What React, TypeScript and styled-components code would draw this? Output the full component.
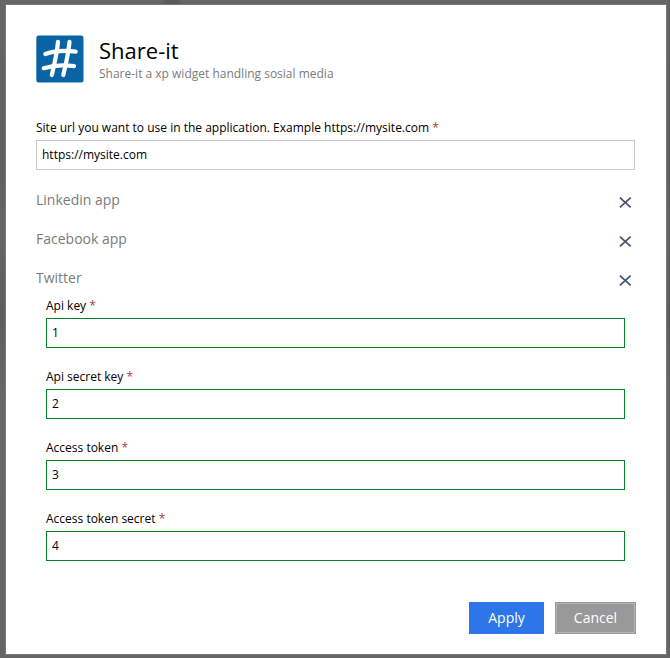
import React from "react";
import styled, { createGlobalStyle } from "styled-components";

const GlobalStyle = createGlobalStyle`
  *, *::before, *::after { box-sizing: border-box; }
  body { margin: 0; font-family: "Open Sans", sans-serif; color: #000; background: #646464; }
`;

const Backdrop = styled.div`
  height: 658px;
  padding: 4px 3px 3px 5px;
  background:
    linear-gradient(90deg, transparent 160px, #5a5a5a 166px, #5a5a5a 176px, transparent 184px) 0 0 / 100% 4px no-repeat,
    linear-gradient(180deg, #666 0, #606060 25%, #666 35%, #5e5e5e 48%, #686868 60%, #646464 100%);
`;

const Dialog = styled.main`
  height: 651px;
  border: 1px solid #777;
  background: #fff;
  padding: 30px 30px 20px;
  display: flex;
  flex-direction: column;
`;

const Header = styled.header`
  display: flex;
  height: 48px;
  gap: 15px;
`;

const Title = styled.h1`
  margin: 0;
  font-size: 22px;
  font-weight: 400;
  line-height: 31px;
`;

const Subtitle = styled.p`
  margin: 0;
  font-size: 12px;
  line-height: 16px;
  color: #7b7b7b;
`;

const Label = styled.label`
  display: block;
  height: 20px;
  font-size: 12px;
  line-height: 16px;
  white-space: nowrap;
`;

const Required = styled.span`
  color: #a4423a;
`;

const Input = styled.input<{ $valid?: boolean }>`
  display: block;
  width: 100%;
  height: 30px;
  padding: 0 5px 2px;
  border: 1px solid ${(p) => (p.$valid ? "#008424" : "#c8c8c8")};
  border-radius: 0;
  outline: none;
  background: #fff;
  color: #000;
  font: 12px "Open Sans", sans-serif;
`;

const SiteField = styled.div`
  margin-top: 37px;
  padding-right: 1px;
`;

const Sections = styled.div`
  margin-top: 20px;
`;

const SectionHead = styled.div`
  display: flex;
  justify-content: space-between;
  height: 39px;
  padding-right: 4px;
`;

const SectionTitle = styled.h2`
  margin: 0;
  font-size: 14px;
  font-weight: 400;
  line-height: 20px;
  color: #7b7b7b;
`;

const Remove = styled.button`
  width: 14px;
  height: 14px;
  margin-top: 6px;
  padding: 0;
  border: 0;
  background: none;
  svg { display: block; }
`;

const Group = styled.div`
  display: grid;
  gap: 21px;
  margin-top: -9px;
  padding: 0 11px 0 10px;
`;

const Footer = styled.footer`
  display: flex;
  justify-content: flex-end;
  gap: 11px;
  margin-top: 41px;
`;

const Button = styled.button<{ $primary?: boolean }>`
  width: ${(p) => (p.$primary ? 75 : 81)}px;
  height: 32px;
  padding: 0 0 2px;
  border: 1px solid ${(p) => (p.$primary ? "#2c76e9" : "#999")};
  box-shadow: ${(p) => (p.$primary ? "none" : "inset 0 0 0 1px #b2b2b7")};
  background: ${(p) => (p.$primary ? "#2c76e9" : "#999")};
  color: #fff;
  font: 14px "Open Sans", sans-serif;
`;

const HashLogo = () => (
  <svg width="48" height="48" viewBox="0 0 48 48" aria-hidden="true">
    <rect x="0.3" y="0.6" width="47.2" height="47" rx="2.5" fill="#0864a4" />
    <g fill="none" stroke="#fff" strokeWidth="4.2" strokeLinecap="round">
      <path d="M22 6.8C21 18 18.5 29 15.8 40M33.5 6.8C32.5 18 30 29 27.3 40" />
      <path d="M9.3 19C18 16 29 15.2 39.7 16.6M7.7 33.2C17 30.4 28 29.8 38 31.2" />
    </g>
  </svg>
);

const Cross = () => (
  <svg width="14" height="14" viewBox="0 0 14 14" aria-hidden="true">
    <path d="M1.9 1.7 12.7 11.3M12.7 1.7 1.9 11.3" fill="none" stroke="#48566b" strokeWidth="1.8" />
  </svg>
);

const sections = ["Linkedin app", "Facebook app", "Twitter"];

const twitterFields = [
  { label: "Api key", value: "1" },
  { label: "Api secret key", value: "2" },
  { label: "Access token", value: "3" },
  { label: "Access token secret", value: "4" },
];

export default function App() {
  return (
    <Backdrop>
      <GlobalStyle />
      <Dialog>
        <Header>
          <HashLogo />
          <div>
            <Title>Share-it</Title>
            <Subtitle>Share-it a xp widget handling sosial media</Subtitle>
          </div>
        </Header>
        <SiteField>
          <Label htmlFor="site">
            Site url you want to use in the application. Example https://mysite.com <Required>*</Required>
          </Label>
          <Input id="site" defaultValue="https://mysite.com" />
        </SiteField>
        <Sections>
          {sections.map((name) => (
            <SectionHead key={name}>
              <SectionTitle>{name}</SectionTitle>
              <Remove aria-label={`Remove ${name}`}>
                <Cross />
              </Remove>
            </SectionHead>
          ))}
          <Group>
            {twitterFields.map(({ label, value }) => (
              <div key={label}>
                <Label htmlFor={label}>
                  {label} <Required>*</Required>
                </Label>
                <Input id={label} $valid defaultValue={value} />
              </div>
            ))}
          </Group>
        </Sections>
        <Footer>
          <Button $primary>Apply</Button>
          <Button>Cancel</Button>
        </Footer>
      </Dialog>
    </Backdrop>
  );
}
